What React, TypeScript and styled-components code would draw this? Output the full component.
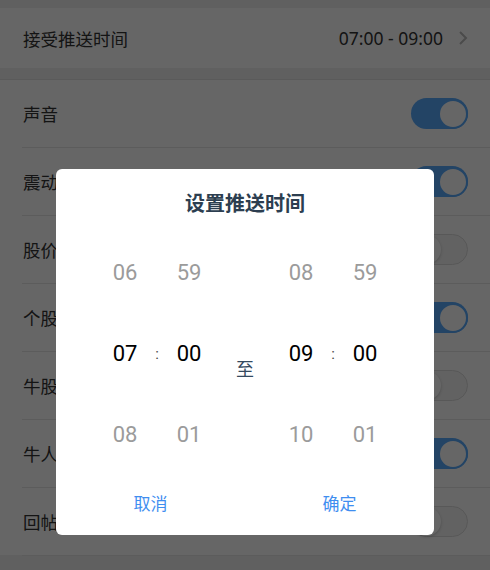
import React, { useState } from 'react'
import styled, { createGlobalStyle, css } from 'styled-components'

const GlobalStyle = createGlobalStyle`
  html, body {
    margin: 0;
    padding: 0;
    background: #f0f0f0;
    font-family: Roboto, "Noto Sans CJK SC", sans-serif;
  }
`

interface ToggleItem {
  label: string
  on: boolean
}

const items: ToggleItem[] = [
  { label: '声音', on: true },
  { label: '震动', on: true },
  { label: '股价提醒', on: false },
  { label: '个股公告', on: true },
  { label: '牛股推荐', on: false },
  { label: '牛人动态', on: true },
  { label: '回帖提醒', on: false },
]

const App = () => {
  const [toggles, setToggles] = useState(items.map((i) => i.on))

  return (
    <>
      <GlobalStyle />
      <Page>
        <TimeRow>
          <Label>接受推送时间</Label>
          <Value>
            07:00 - 09:00
            <Chevron width="10" height="16" viewBox="0 0 10 16">
              <path d="M2 2 L8 8 L2 14" fill="none" stroke="#bbb" strokeWidth="2" />
            </Chevron>
          </Value>
        </TimeRow>
        <List>
          {items.map((item, i) => (
            <Row key={item.label}>
              <Label>{item.label}</Label>
              <Switch
                on={toggles[i]}
                onClick={() => setToggles(toggles.map((t, j) => (j === i ? !t : t)))}
              >
                <Knob on={toggles[i]} />
              </Switch>
            </Row>
          ))}
        </List>
      </Page>
      <Overlay>
        <Dialog>
          <Title>设置推送时间</Title>
          <Picker>
            <Cell>06</Cell>
            <Cell />
            <Cell>59</Cell>
            <Cell />
            <Cell>08</Cell>
            <Cell />
            <Cell>59</Cell>

            <Cell selected>07</Cell>
            <Colon>:</Colon>
            <Cell selected>00</Cell>
            <To>至</To>
            <Cell selected>09</Cell>
            <Colon>:</Colon>
            <Cell selected>00</Cell>

            <Cell>08</Cell>
            <Cell />
            <Cell>01</Cell>
            <Cell />
            <Cell>10</Cell>
            <Cell />
            <Cell>01</Cell>
          </Picker>
          <Buttons>
            <ActionButton>取消</ActionButton>
            <ActionButton>确定</ActionButton>
          </Buttons>
        </Dialog>
      </Overlay>
    </>
  )
}

const Page = styled.div`
  min-height: 570px;
  padding-top: 8px;
  box-sizing: border-box;
  background: #f0f0f0;
`

const TimeRow = styled.div`
  height: 60px;
  display: flex;
  align-items: center;
  justify-content: space-between;
  padding: 0 22px 0 23px;
  background: #fff;
`

const Label = styled.span`
  font-size: 17.5px;
  color: #333;
`

const Value = styled.span`
  display: flex;
  align-items: center;
  gap: 15px;
  font-family: "Noto Sans", Roboto, sans-serif;
  font-size: 17.5px;
  color: #333;
`

const Chevron = styled.svg`
  display: block;
`

const List = styled.div`
  margin-top: 11px;
  border-top: 1px solid #e2e2e2;
  background: #fff;
`

const Row = styled.div`
  height: 67px;
  display: flex;
  align-items: center;
  justify-content: space-between;
  padding: 0 22px 0 23px;
  position: relative;

  &:after {
    content: '';
    position: absolute;
    left: 22px;
    right: 0;
    bottom: -1px;
    height: 1px;
    background: #e6e6e6;
  }

  & + & {
    margin-top: 1px;
  }
`

interface OnProps {
  on: boolean
}

const Switch = styled.div<OnProps>`
  width: 57px;
  height: 31px;
  border-radius: 16px;
  box-sizing: border-box;
  display: flex;
  align-items: center;
  cursor: pointer;

  ${(props) => props.on
  ? css`
    background: #58aafc;
    justify-content: flex-end;
  `
  : css`
    background: #f4f4f4;
    border: 1px solid #dcdcdc;
    justify-content: flex-start;
  `}
`

const Knob = styled.div<OnProps>`
  width: 30px;
  height: 30px;
  border-radius: 50%;
  box-sizing: border-box;
  background: #fff;

  ${(props) => props.on
  ? css`
    border: 2px solid #58aafc;
  `
  : css`
    width: 29px;
    height: 29px;
    box-shadow: 0 1px 3px rgba(0, 0, 0, 0.2);
  `}
`

const Overlay = styled.div`
  position: fixed;
  inset: 0;
  background: rgba(0, 0, 0, 0.6);
  display: flex;
  justify-content: center;
  align-items: flex-start;
  padding-top: 169px;
`

const Dialog = styled.div`
  width: 378px;
  background: #fff;
  border-radius: 6px;
  padding-bottom: 6px;
`

const Title = styled.div`
  padding-top: 21px;
  line-height: 28px;
  text-align: center;
  font-size: 20px;
  font-weight: bold;
  color: #2c3e50;
`

const Picker = styled.div`
  margin-top: 14px;
  display: grid;
  grid-template-columns: 50px 14px 50px 62px 50px 14px 50px;
  grid-auto-rows: 81px;
  justify-content: center;
`

const Cell = styled.div<{ selected?: boolean }>`
  display: flex;
  align-items: center;
  justify-content: center;
  font-family: Roboto, sans-serif;
  font-size: 22px;
  color: ${(props) => (props.selected ? '#000' : '#9b9b9b')};
`

const Colon = styled.div`
  display: flex;
  align-items: center;
  justify-content: center;
  font-size: 15px;
  color: #444;
`

const To = styled.div`
  display: flex;
  align-items: center;
  justify-content: center;
  padding-top: 28px;
  font-size: 18px;
  color: #34495e;
`

const Buttons = styled.div`
  height: 54px;
  display: grid;
  grid-template-columns: 1fr 1fr;
  align-items: center;
`

const ActionButton = styled.div`
  text-align: center;
  font-size: 17px;
  color: #3f8ef0;
  cursor: pointer;
`

export default App
